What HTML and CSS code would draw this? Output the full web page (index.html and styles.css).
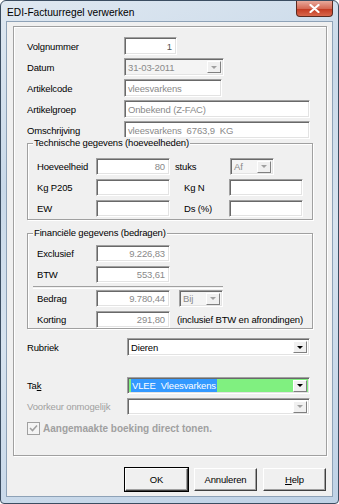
FILE: index.html
```html
<!DOCTYPE html>
<html lang="nl">
<head>
  <meta charset="UTF-8">
  <title>EDI-Factuurregel verwerken</title>
  <link rel="stylesheet" href="styles.css">
</head>
<body>
  <div class="window">
    <div class="titlebar">
      <span class="title">EDI-Factuurregel verwerken</span>
      <div class="close">
        <svg width="11" height="9" viewBox="0 0 11 9"><path d="M1.5 1 L9.5 8 M9.5 1 L1.5 8" stroke="#fff" stroke-width="2.2" stroke-linecap="round"/></svg>
      </div>
    </div>

    <div class="client">
      <div class="panel">
        <div class="row">
          <span class="lbl">Volgnummer</span>
          <div class="edit ro num w-volg">1</div>
        </div>
        <div class="row">
          <span class="lbl">Datum</span>
          <div class="combo off w-datum"><span class="ctext">31-03-2011</span><span class="cbtn"><i class="arrow"></i></span></div>
        </div>
        <div class="row">
          <span class="lbl">Artikelcode</span>
          <div class="edit ro w-code">vleesvarkens</div>
        </div>
        <div class="row">
          <span class="lbl">Artikelgroep</span>
          <div class="edit ro w-wide">Onbekend (Z-FAC)</div>
        </div>
        <div class="row">
          <span class="lbl">Omschrijving</span>
          <div class="edit ro w-wide">vleesvarkens&nbsp; 6763,9&nbsp; KG</div>
        </div>

        <div class="group g-tech">
          <span class="legend">Technische gegevens (hoeveelheden)</span>
          <div class="grow">
            <span class="glbl">Hoeveelheid</span>
            <div class="edit ro num w-amt">80</div>
            <span class="unit">stuks</span>
            <div class="combo off w-small af"><span class="ctext">Af</span><span class="cbtn"><i class="arrow"></i></span></div>
          </div>
          <div class="grow">
            <span class="glbl">Kg P205</span>
            <div class="edit w-amt"></div>
            <span class="glbl2">Kg N</span>
            <div class="edit w-amt"></div>
          </div>
          <div class="grow">
            <span class="glbl">EW</span>
            <div class="edit w-amt"></div>
            <span class="glbl2">Ds (%)</span>
            <div class="edit w-amt"></div>
          </div>
        </div>

        <div class="group g-fin">
          <span class="legend">Financiële gegevens (bedragen)</span>
          <div class="grow">
            <span class="glbl">Exclusief</span>
            <div class="edit ro num w-amt">9.226,83</div>
          </div>
          <div class="grow">
            <span class="glbl">BTW</span>
            <div class="edit ro num w-amt">553,61</div>
          </div>
          <div class="bevel"></div>
          <div class="grow">
            <span class="glbl">Bedrag</span>
            <div class="edit ro num w-amt">9.780,44</div>
            <div class="combo off w-small bij"><span class="ctext">Bij</span><span class="cbtn"><i class="arrow"></i></span></div>
          </div>
          <div class="grow">
            <span class="glbl">Korting</span>
            <div class="edit ro num w-amt">291,80</div>
            <span class="note">(inclusief BTW en afrondingen)</span>
          </div>
        </div>

        <div class="row row-rubriek">
          <span class="lbl lbl-low">Rubriek</span>
          <div class="combo w-combo"><span class="ctext dark">Dieren</span><span class="cbtn"><i class="arrow on"></i></span></div>
        </div>
        <div class="row row-tak">
          <span class="lbl lbl-low">Ta<u>k</u></span>
          <div class="combo green w-combo"><span class="ctext"><span class="sel">VLEE&nbsp; Vleesvarkens</span></span><span class="cbtn"><i class="arrow on"></i></span></div>
        </div>
        <div class="row row-voork">
          <span class="lbl lbl-low disabled">Voorkeur onmogelijk</span>
          <div class="combo w-combo"><span class="ctext"></span><span class="cbtn"><i class="arrow"></i></span></div>
        </div>
        <div class="check-row">
          <span class="checkbox">
            <svg width="9" height="9" viewBox="0 0 9 9"><path d="M1 4 L3.5 6.5 L8 1.5" fill="none" stroke="#a0a0a0" stroke-width="1.6"/></svg>
          </span>
          <span class="check-label">Aangemaakte boeking direct tonen.</span>
        </div>
      </div>

      <div class="buttons">
        <button class="btn default">OK</button>
        <button class="btn">Annuleren</button>
        <button class="btn"><u>H</u>elp</button>
      </div>
    </div>
  </div>
</body>
</html>
```

FILE: styles.css
```css
html, body {
  margin: 0;
  padding: 0;
}
body {
  width: 339px;
  height: 504px;
  overflow: hidden;
  background: #fff;
  font-family: 'Liberation Sans', Arial, sans-serif;
  font-size: 9.5px;
  letter-spacing: -0.15px;
  color: #000;
}

/* window frame */
.window {
  width: 339px;
  height: 504px;
  box-sizing: border-box;
  border: 1px solid #3b4d61;
  border-radius: 6px 6px 4px 4px;
  background: linear-gradient(160deg, #dfe8f1 0%, #c9d9e9 30%, #d7e3ef 55%, #bfd2e6 100%);
  padding: 0 6px;
}
.titlebar {
  height: 21px;
  display: flex;
  align-items: center;
  position: relative;
}
.title {
  font-size: 10.2px;
  letter-spacing: 0;
  color: #000;
  margin-left: 0;
  margin-top: 1px;
}
.close {
  position: absolute;
  right: -1px;
  top: 0;
  width: 37px;
  height: 16px;
  box-sizing: border-box;
  border: 1px solid #5b2a20;
  border-top: none;
  border-radius: 0 0 4px 4px;
  background: linear-gradient(#e9a99b, #d56a55 50%, #c2381f 51%, #d8674c);
  display: flex;
  align-items: center;
  justify-content: center;
}

.client {
  width: 325px;
  height: 474px;
  background: #f0f0f0;
  box-shadow: 0 0 0 1px #8ea2b7;
  overflow: hidden;
}

/* etched panel */
.panel {
  margin: 4px 0 0 6px;
  width: 314px;
  height: 430px;
  box-sizing: border-box;
  border: 1px solid #a0a0a0;
  box-shadow: inset 1px 1px 0 #fff, 1px 1px 0 #fff;
  padding: 10px 0 0 13px;
}
.row {
  display: flex;
  align-items: center;
  height: 18px;
  margin-bottom: 3px;
}
.lbl {
  width: 97px;
  flex: none;
}
.lbl-low {
  width: 100px;
}
.disabled {
  color: #a0a0a0;
}

/* sunken edit */
.edit, .combo {
  box-sizing: border-box;
  height: 100%;
  background: #fff;
  border-top: 1px solid #a0a0a0;
  border-left: 1px solid #a0a0a0;
  border-right: 1px solid #fff;
  border-bottom: 1px solid #fff;
  box-shadow: inset 1px 1px 0 #696969, inset -1px -1px 0 #e3e3e3;
  padding: 0 4px 0 3px;
  display: flex;
  align-items: center;
  flex: none;
  white-space: nowrap;
  overflow: hidden;
}
.ro {
  color: #8a8a8a;
}
.num {
  justify-content: flex-end;
}
.w-volg { width: 53px; color: #555; }
.w-datum { width: 100px; }
.w-code { width: 98px; }
.w-wide { width: 186px; }
.w-amt { width: 74px; }
.w-small { width: 44px; }
.w-combo { width: 183px; }

.combo {
  padding: 0 2px 0 0;
  justify-content: space-between;
}
.combo.off {
  background: #f4f4f4;
}
.ctext {
  padding-left: 3px;
  color: #8a8a8a;
}
.ctext.dark {
  color: #000;
}
.cbtn {
  width: 14px;
  height: 12px;
  box-sizing: border-box;
  background: #f0f0f0;
  border-top: 1px solid #fff;
  border-left: 1px solid #fff;
  border-right: 1px solid #808080;
  border-bottom: 1px solid #808080;
  display: flex;
  align-items: center;
  justify-content: center;
}
.arrow {
  width: 0;
  height: 0;
  border-left: 3px solid transparent;
  border-right: 3px solid transparent;
  border-top: 3px solid #a0a0a0;
}
.arrow.on {
  border-top-color: #000;
}
.combo.green {
  background: #80f080;
}
.sel {
  background: #3399ff;
  color: #fff;
  padding: 1px 1px;
}

/* group boxes */
.group {
  position: relative;
  width: 286px;
  box-sizing: border-box;
  border: 1px solid #a0a0a0;
  box-shadow: inset 1px 1px 0 #fff, 1px 1px 0 #fff;
  padding-left: 9px;
}
.legend {
  position: absolute;
  left: 5px;
  top: -7px;
  background: #f0f0f0;
  padding: 0 1px;
  line-height: 12px;
}
.g-tech {
  margin-top: 4px;
  height: 77px;
  padding-top: 14px;
}
.g-fin {
  margin-top: 13px;
  height: 96px;
  padding-top: 11px;
}
.grow {
  display: flex;
  align-items: center;
  height: 17px;
  margin-bottom: 4px;
}
.g-fin .grow:nth-of-type(2) {
  margin-bottom: 0;
}
.glbl {
  width: 59px;
  flex: none;
}
.glbl2 {
  width: 45px;
  padding-left: 14px;
  flex: none;
}
.unit {
  margin-left: 5px;
  width: 54px;
  flex: none;
}
.af { margin-left: 1px; }
.bij { margin-left: 9px; }
.note { margin-left: 7px; }
.bevel {
  margin: 3px 0 1px -4px;
  width: 190px;
  height: 1px;
  border-top: 1px solid #a0a0a0;
  border-bottom: 1px solid #fff;
}

.row-rubriek { margin-top: 9px; }
.row-tak { margin-top: 21px; height: 17px; margin-bottom: 4px; }
.row-voork { height: 17px; }

.check-row {
  display: flex;
  align-items: center;
  margin-top: 7px;
  height: 13px;
}
.checkbox {
  width: 13px;
  height: 13px;
  box-sizing: border-box;
  border: 1px solid #a0a0a0;
  background: #f4f4f4;
  display: flex;
  align-items: center;
  justify-content: center;
}
.check-label {
  margin-left: 3px;
  font-weight: bold;
  font-size: 10px;
  letter-spacing: 0;
  color: #a0a0a0;
}

/* buttons */
.buttons {
  display: flex;
  gap: 6px;
  margin: 12px 0 0 118px;
}
.btn {
  width: 63px;
  height: 23px;
  box-sizing: border-box;
  font: inherit;
  letter-spacing: inherit;
  color: #000;
  background: #f0f0f0;
  border-top: 1px solid #fff;
  border-left: 1px solid #fff;
  border-right: 1px solid #404040;
  border-bottom: 1px solid #404040;
  box-shadow: inset -1px -1px 0 #a0a0a0;
  padding: 0;
}
.btn.default {
  outline: 1px solid #000;
  outline-offset: 0;
}
```
